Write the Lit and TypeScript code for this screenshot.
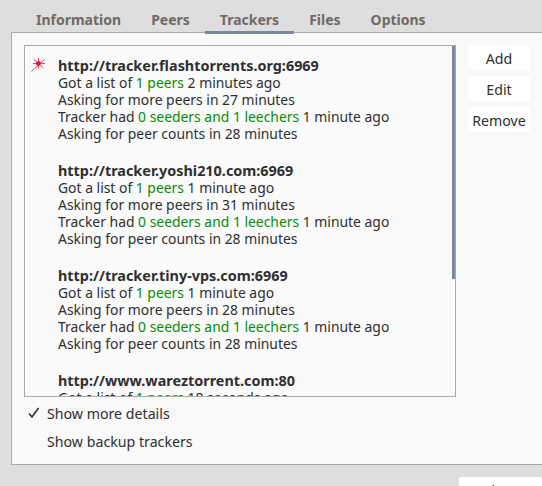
import { LitElement, html, css } from "lit";
import { customElement } from "lit/decorators.js";

interface Tracker { url: string; got: string; next: string; had: string; counts: string; }

const trackers: Tracker[] = [
  { url: "http://tracker.flashtorrents.org:6969", got: "2 minutes ago", next: "27 minutes", had: "1 minute ago", counts: "28 minutes" },
  { url: "http://tracker.yoshi210.com:6969", got: "1 minute ago", next: "31 minutes", had: "1 minute ago", counts: "28 minutes" },
  { url: "http://tracker.tiny-vps.com:6969", got: "1 minute ago", next: "28 minutes", had: "1 minute ago", counts: "28 minutes" },
  { url: "http://www.wareztorrent.com:80", got: "18 seconds ago", next: "28 minutes", had: "1 minute ago", counts: "28 minutes" },
];

@customElement("app-root")
export class AppRoot extends LitElement {
  static styles = css`
    :host {
      display: flex;
      flex-direction: column;
      height: 486px;
      width: 542px;
      overflow: hidden;
      background: #dedede;
      color: #2f2f2f;
      font-family: "Noto Sans", "Open Sans", sans-serif;
      font-size: 14px;
    }
    .tabs { display: flex; height: 33px; padding-left: 21px; flex: none; margin-bottom: -1px; position: relative; }
    .tab {
      padding: 11px 15px 0;
      font-weight: 700;
      font-size: 14px;
      line-height: 18px;
      color: #6f6a66;
      box-sizing: border-box;
      height: 34px;
      border-bottom: 3px solid transparent;
    }
    .tab.on { border-bottom-color: #7c869c; }
    .panel {
      flex: none;
      height: 433px;
      margin: 0 -3px 0 11px;
      box-sizing: border-box;
      background: #f9f9f9;
      border: 1px solid #aaaaaa;
      padding: 12px 0 0 12px;
      display: flex;
      flex-direction: column;
    }
    .top { display: flex; gap: 12px; }
    .list {
      position: relative;
      flex: none;
      width: 432px;
      height: 352px;
      box-sizing: border-box;
      border: 1px solid #aaaaaa;
      background: #fafafa;
      overflow: hidden;
      padding: 11px 0 0 33px;
    }
    .thumb { position: absolute; top: 0; right: 0; width: 3px; height: 233px; background: #7c869c; }
    .tracker { position: relative; line-height: 17px; height: 105px; white-space: nowrap; font-size: 13.9px; }
    .tracker b { display: block; font-size: 14.4px; }
    .tracker i { font-style: normal; color: #068c06; }
    .star { position: absolute; left: -27px; top: 0; }
    .btns { display: flex; flex: none; flex-direction: column; gap: 6px; width: 62px; }
    .btn {
      height: 25px;
      line-height: 27px;
      text-align: center;
      background: #ffffff;
      border-radius: 2px;
      font-size: 14.2px;
      color: #2f2f2f;
    }
    .opts { display: flex; flex-direction: column; margin-top: 8px; gap: 11px; }
    .opt { position: relative; padding-left: 23px; line-height: 17px; font-size: 14.2px; }
    .check { position: absolute; left: 4px; top: 2px; }
    .foot { display: flex; justify-content: flex-end; flex: none; padding-top: 12px; }
    .close {
      width: 83px;
      height: 30px;
      background: #ffffff;
      border-radius: 2px;
      text-align: center;
      line-height: 28px;
      font-size: 14px;
    }
  `;

  render() {
    return html`
      <div class="tabs">
        ${["Information", "Peers", "Trackers", "Files", "Options"].map(
          (t) => html`<div class="tab ${t === "Trackers" ? "on" : ""}">${t}</div>`
        )}
      </div>
      <div class="panel">
        <div class="top">
          <div class="list">
            ${trackers.map(
              (t, i) => html`
                <div class="tracker">
                  ${i === 0
                    ? html`<svg class="star" width="15" height="15" viewBox="0 0 15 15">
                        <path d="M0.5 14.5 L13.5 2.5 M2.5 2 L12.5 11 M7.5 1 L7.5 11.5 M2 6.5 L14 6.5" stroke="#e8123c" stroke-width="0.8" fill="none"/>
                        <circle cx="7.5" cy="6.5" r="2.4" fill="#e8123c"/>
                      </svg>`
                    : ""}
                  <b>${t.url}</b>
                  <div>Got a list of <i>1 peers</i> ${t.got}</div>
                  <div>Asking for more peers in ${t.next}</div>
                  <div>Tracker had <i>0 seeders and 1 leechers</i> ${t.had}</div>
                  <div>Asking for peer counts in ${t.counts}</div>
                </div>
              `
            )}
            <div class="thumb"></div>
          </div>
          <div class="btns">
            <div class="btn">Add</div>
            <div class="btn">Edit</div>
            <div class="btn">Remove</div>
          </div>
        </div>
        <div class="opts">
          <div class="opt">
            <svg class="check" width="12" height="12" viewBox="0 0 12 12">
              <path d="M1 6.5 L4 10 L10.5 1" stroke="#2f2f2f" stroke-width="1.6" fill="none"/>
            </svg>
            Show more details
          </div>
          <div class="opt">Show backup trackers</div>
        </div>
      </div>
      <div class="foot"><div class="close">Close</div></div>
    `;
  }
}
